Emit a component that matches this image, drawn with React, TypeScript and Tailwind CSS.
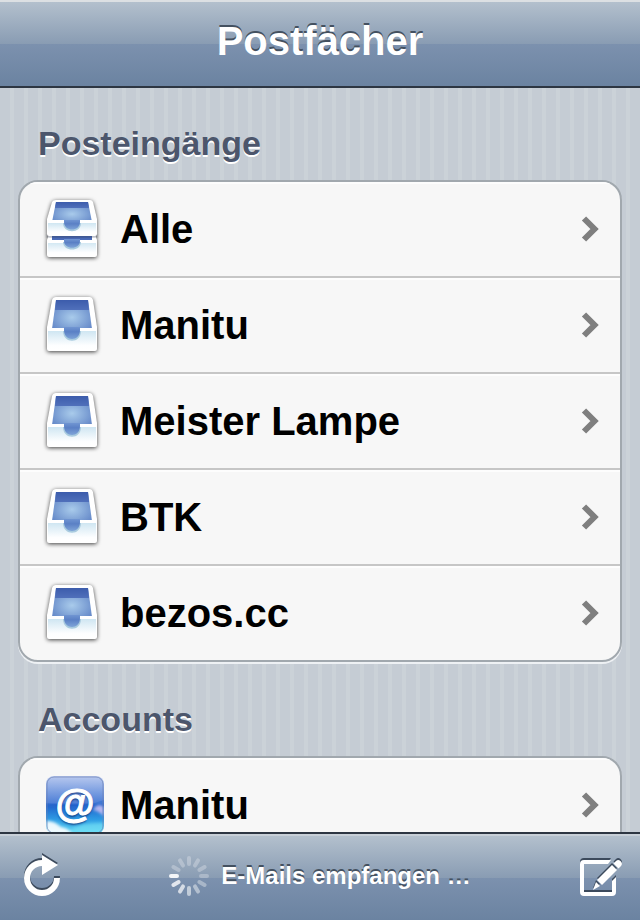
import React from "react";

const BAR =
  "bg-[linear-gradient(to_bottom,#b3c0cd_0%,#899cb3_50%,#7c91ae_50%,#6b83a1_100%)]";
const ETCHED = "[text-shadow:0_-2px_0_#445160]";

function TrayDefs() {
  return (
    <svg className="absolute h-0 w-0" aria-hidden="true">
      <defs>
        <radialGradient id="well" cx="0.5" cy="0.6" r="0.6">
          <stop offset="0" stopColor="#a9cbeb" />
          <stop offset="1" stopColor="#6488c8" />
        </radialGradient>
        <linearGradient id="back" x1="0" y1="0" x2="0" y2="1">
          <stop offset="0" stopColor="#3c5cac" />
          <stop offset="1" stopColor="#5070bb" />
        </linearGradient>
        <linearGradient id="front" x1="0" y1="0" x2="0" y2="1">
          <stop offset="0" stopColor="#cfe6f2" />
          <stop offset="0.8" stopColor="#fdfeff" />
          <stop offset="1" stopColor="#ffffff" />
        </linearGradient>
        <linearGradient id="notch" x1="0" y1="0" x2="0" y2="1">
          <stop offset="0" stopColor="#7095d2" />
          <stop offset="0.4" stopColor="#5a80c5" />
          <stop offset="1" stopColor="#7fa4d8" />
        </linearGradient>
        <linearGradient id="mailSky" x1="0" y1="0" x2="0" y2="1">
          <stop offset="0" stopColor="#b9c9ef" />
          <stop offset="0.46" stopColor="#4f80d7" />
          <stop offset="0.5" stopColor="#1f61cb" />
          <stop offset="0.75" stopColor="#2e9ce4" />
          <stop offset="1" stopColor="#65dcf5" />
        </linearGradient>
        <filter id="soft" x="-30%" y="-30%" width="160%" height="160%">
          <feGaussianBlur stdDeviation="1.5" />
        </filter>
      </defs>
    </svg>
  );
}

const TRAY_ART =
  "-ml-px block h-16 w-15 shrink-0 [filter:drop-shadow(0_1px_2px_rgba(0,0,0,0.75))]";

function TrayIcon() {
  return (
    <svg viewBox="0 0 60 64" className={TRAY_ART} aria-hidden="true">
      <path d="M13 4 H47 Q49 4 50 7 L54 34 V56 Q54 58 52 58 H6 Q4 58 4 56 V34 L9 7 Q10 4 13 4Z" fill="#fff" />
      <path d="M13 7 H45 L49 36 H9Z" fill="url(#well)" />
      <path d="M13 7 H45 L46 17 H12Z" fill="url(#back)" />
      <path d="M5 38 H53 V56 H5Z" fill="url(#front)" />
      <path d="M5 35 H21 V38 H5Z M37 35 H53 V38 H37Z" fill="#fff" />
      <path d="M20 38 H38 C38 51 20 51 20 38Z" fill="#a9cbdf" />
      <path d="M21 34 H37 V37 C37 49 21 49 21 37Z" fill="url(#notch)" />
    </svg>
  );
}

function StackedTrayIcon() {
  return (
    <svg viewBox="0 0 60 64" className={TRAY_ART} aria-hidden="true">
      <path d="M6 37 H52 L54 43 V58 Q54 60 52 60 H6 Q4 60 4 58 V43Z" fill="#fff" />
      <path d="M9 38 H49 V44 H9Z" fill="url(#back)" />
      <path d="M5 45 H53 V58 H5Z" fill="url(#front)" />
      <path d="M5 43 H21 V46 H5Z M37 43 H53 V46 H37Z" fill="#fff" />
      <path d="M20 45 H38 C38 55 20 55 20 45Z" fill="#a9cbdf" />
      <path d="M21 42 H37 V44 C37 53 21 53 21 44Z" fill="url(#notch)" />
      <path d="M4 38 H54 V40 H4Z" fill="#3d4a60" opacity="0.7" filter="url(#soft)" />
      <path d="M13 3 H47 Q49 3 50 5 L54 22 V37 Q54 39 52 39 H6 Q4 39 4 37 V22 L9 5 Q10 3 13 3Z" fill="#fff" />
      <path d="M13 5 H45 L49 25 H9Z" fill="url(#well)" />
      <path d="M13 5 H45 L46 11 H12Z" fill="url(#back)" />
      <path d="M5 26 H53 V37 H5Z" fill="url(#front)" />
      <path d="M5 23 H21 V26 H5Z M37 23 H53 V26 H37Z" fill="#fff" />
      <path d="M20 26 H38 C38 37 20 37 20 26Z" fill="#a9cbdf" />
      <path d="M21 23 H37 V25 C37 35 21 35 21 25Z" fill="url(#notch)" />
    </svg>
  );
}

function MailAccountIcon() {
  return (
    <span className="relative ml-0.5 block h-[58px] w-[58px] shrink-0 overflow-hidden rounded-lg">
      <svg viewBox="0 0 58 58" className="block h-full w-full" aria-hidden="true">
        <rect width="58" height="58" fill="url(#mailSky)" />
        <path d="M0 27 Q29 35 58 24 V29 Q29 38 0 30Z" fill="#2c6bce" opacity="0.5" />
        <g filter="url(#soft)">
          <path d="M0 45 Q8 44 15 51 Q22 52 27 58 H0Z" fill="#fff" opacity="0.9" />
          <path d="M47 34 Q52 26 58 31 V40 Q51 34 47 34Z" fill="#c3bdf2" opacity="0.9" />
          <path d="M26 53 Q38 46 58 47 V58 H24Z" fill="#77e3f5" opacity="0.6" />
        </g>
        <rect x="1" y="1" width="56" height="56" rx="7" fill="none" stroke="#6d82b4" strokeWidth="1" opacity="0.7" />
      </svg>
      <span
        className="absolute inset-x-0 top-1 text-center text-[40px] leading-[46px] font-bold text-white [-webkit-text-stroke:1px_white] [text-shadow:0_2px_2px_rgba(10,40,110,0.7)]"
        aria-hidden="true"
      >
        @
      </span>
    </span>
  );
}

function Chevron() {
  return (
    <svg viewBox="0 0 20 28" className="block h-7 w-5 shrink-0" aria-hidden="true">
      <path d="M4 3.5 L14.5 14 L4 24.5" fill="none" stroke="#7f7f7f" strokeWidth="6" />
    </svg>
  );
}

function RefreshIcon() {
  const arrow = "M18 3 L34 13 L18 23 V14 A12 12 0 1 0 30 26 H36 A18 18 0 1 1 18 8Z";
  return (
    <svg viewBox="0 0 36 48" className="block h-12 w-9" aria-hidden="true">
      <path d={arrow} fill="#3c4a5c" transform="translate(0 -2)" />
      <path d={arrow} fill="#fff" />
    </svg>
  );
}

function ComposeArt({ color }: { color: string }) {
  return (
    <g fill={color}>
      <path d="M31 5 H4 Q0 5 0 9 V37 Q0 41 4 41 H32 Q36 41 36 37 V22 L32 26 V37 H4 V9 H28Z" />
      <path d="M13 35 L16 27 L20 31Z" />
      <path d="M17 25 L32 10 L37 15 L22 30Z" />
      <path d="M33.5 8.5 L36 6 Q38 4 40.5 6 Q43 8.5 41 11 L38.5 13.5Z" />
    </g>
  );
}

function ComposeIcon() {
  return (
    <svg viewBox="0 0 44 42" className="block h-[42px] w-11" aria-hidden="true">
      <g transform="translate(0 -2)">
        <ComposeArt color="#3c4a5c" />
      </g>
      <ComposeArt color="#fff" />
    </svg>
  );
}

const SPOKES = [0.3, 0.3, 0.3, 0.3, 0.38, 0.48, 0.6, 0.75, 0.85, 1, 0.3, 0.3];

function Spinner() {
  return (
    <svg viewBox="0 0 40 40" className="block h-10 w-10 shrink-0" aria-hidden="true">
      {SPOKES.map((opacity, i) => (
        <rect
          key={i}
          x="18"
          y="0"
          width="4"
          height="10"
          rx="2"
          fill="#f4f6f8"
          opacity={opacity}
          transform={`rotate(${i * 30} 20 20)`}
        />
      ))}
    </svg>
  );
}

type Kind = "stack" | "tray" | "account";

function Row({ kind, label }: { kind: Kind; label: string }) {
  return (
    <li className="border-b-2 border-[#c6c6c6] shadow-[inset_0_2px_0_#fdfdfd] last:border-b-0">
      <button type="button" className="flex h-[94px] w-full items-center pr-5 pl-6 text-left">
        <span className="flex w-19 shrink-0">
          {kind === "stack" && <StackedTrayIcon />}
          {kind === "tray" && <TrayIcon />}
          {kind === "account" && <MailAccountIcon />}
        </span>
        <span className="min-w-0 flex-1 truncate text-[40px] leading-12 font-bold text-black">{label}</span>
        <Chevron />
      </button>
    </li>
  );
}

function Section({ title, rows }: { title: string; rows: { kind: Kind; label: string }[] }) {
  return (
    <section className="mb-[38px]">
      <h2 className="mb-[18px] pl-5 text-[34px] leading-[38px] font-bold text-[#4c566c] [text-shadow:0_2px_0_#fff]">
        {title}
      </h2>
      <ul className="overflow-hidden rounded-[20px] border-2 border-[#a1a8ae] bg-[#f7f7f7] shadow-[0_2px_0_#eef1f4]">
        {rows.map((row) => (
          <Row key={row.label} kind={row.kind} label={row.label} />
        ))}
      </ul>
    </section>
  );
}

export default function App() {
  return (
    <div className="flex h-screen flex-col bg-[#c5ccd4] [font-family:'Liberation_Sans',Arial,sans-serif]">
      <TrayDefs />
      <header
        className={`flex h-22 shrink-0 items-center justify-center border-t-2 border-b-2 border-t-[#dce0e3] border-b-[#2d3642] pb-1.5 ${BAR}`}
      >
        <h1 className={`text-[40px] leading-12 font-bold text-white ${ETCHED}`}>Postfächer</h1>
      </header>
      <main className="min-h-0 flex-1 overflow-y-auto bg-[repeating-linear-gradient(to_right,#c5ccd4_0px,#c5ccd4_10px,#cbd2d8_10px,#cbd2d8_14px)] px-[18px] pt-9 [scrollbar-width:none]">
        <Section
          title="Posteingänge"
          rows={[
            { kind: "stack", label: "Alle" },
            { kind: "tray", label: "Manitu" },
            { kind: "tray", label: "Meister Lampe" },
            { kind: "tray", label: "BTK" },
            { kind: "tray", label: "bezos.cc" },
          ]}
        />
        <Section title="Accounts" rows={[{ kind: "account", label: "Manitu" }]} />
      </main>
      <footer className="shrink-0 border-t-2 border-[#2d3642]">
        <div className={`flex h-[86px] items-center justify-between border-t-2 border-[#c8d0d8] pr-4 pb-1 pl-6 ${BAR}`}>
          <button type="button" aria-label="Aktualisieren" className="block">
            <RefreshIcon />
          </button>
          <div role="status" className="flex items-center gap-3">
            <Spinner />
            <span className={`text-[24px] leading-8 font-bold text-white ${ETCHED}`}>E-Mails empfangen …</span>
          </div>
          <button type="button" aria-label="Neue E-Mail" className="block">
            <ComposeIcon />
          </button>
        </div>
      </footer>
    </div>
  );
}
